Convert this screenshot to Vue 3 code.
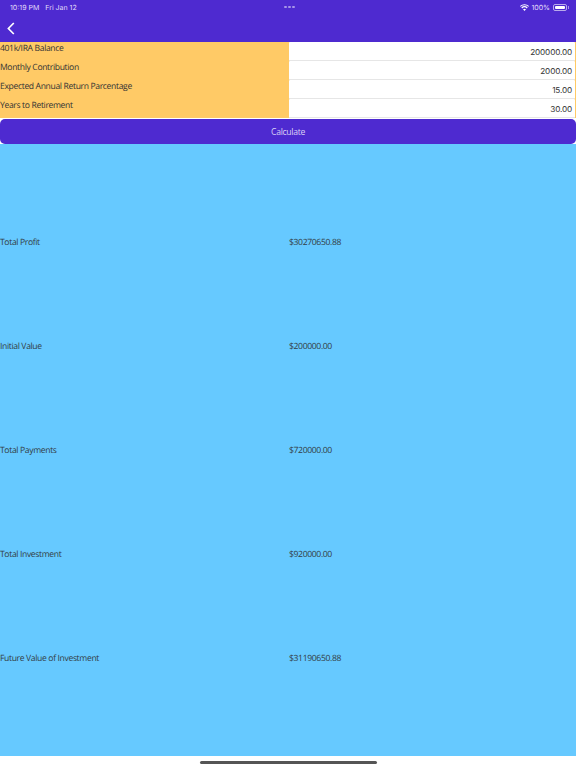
<script setup>
const fields = [
  { label: '401k/IRA Balance', value: '200000.00' },
  { label: 'Monthly Contribution', value: '2000.00' },
  { label: 'Expected Annual Return Parcentage', value: '15.00' },
  { label: 'Years to Retirement', value: '30.00' },
];

const results = [
  { label: 'Total Profit', value: '$30270650.88' },
  { label: 'Initial Value', value: '$200000.00' },
  { label: 'Total Payments', value: '$720000.00' },
  { label: 'Total Investment', value: '$920000.00' },
  { label: 'Future Value of Investment', value: '$31190650.88' },
];
</script>

<template>
  <div class="page">
    <header class="header">
      <div class="status">
        <div class="status-left">
          <span>10:19 PM</span>
          <span>Fri Jan 12</span>
        </div>
        <div class="dots"><i></i><i></i><i></i></div>
        <div class="status-right">
          <svg class="wifi" width="9" height="7" viewBox="0 0 18 14">
            <path d="M9 14 L6 10.6 A4.6 4.6 0 0 1 12 10.6 Z" fill="#fff" />
            <path d="M4.4 8.8 L2.6 6.8 A9.4 9.4 0 0 1 15.4 6.8 L13.6 8.8 A6.8 6.8 0 0 0 4.4 8.8 Z" fill="#fff" />
            <path d="M1.4 5.4 L0 3.8 A13.4 13.4 0 0 1 18 3.8 L16.6 5.4 A11.2 11.2 0 0 0 1.4 5.4 Z" fill="#fff" />
          </svg>
          <span>100%</span>
          <div class="battery"><div class="battery-fill"></div></div>
          <div class="battery-tip"></div>
        </div>
      </div>
      <div class="nav">
        <svg width="8" height="13" viewBox="0 0 8 13" fill="none">
          <path d="M6.8 1 L1.4 6.5 L6.8 12" stroke="#fff" stroke-width="1.7" />
        </svg>
      </div>
    </header>

    <section class="form">
      <template v-for="field in fields" :key="field.label">
        <div class="field-label">{{ field.label }}</div>
        <div class="field-input">{{ field.value }}</div>
      </template>
    </section>

    <button class="calc-btn">Calculate</button>

    <section class="results">
      <div v-for="row in results" :key="row.label" class="result-row">
        <span>{{ row.label }}</span>
        <span>{{ row.value }}</span>
      </div>
    </section>

    <footer class="home-bar"><div class="home-indicator"></div></footer>
  </div>
</template>

<style scoped>
.page {
  display: flex;
  flex-direction: column;
  width: 576px;
  height: 768px;
  background-color: #fff;
  font-family: "Open Sans", sans-serif;
  text-rendering: geometricPrecision;
  overflow: hidden;
}

.header {
  height: 42px;
  background-color: #4e2ad0;
  color: #fff;
}

.status {
  display: flex;
  justify-content: space-between;
  align-items: center;
  height: 14px;
  padding: 0 7px 0 10px;
  font-family: Inter, sans-serif;
  font-size: 7px;
  color: #e4defa;
}

.status-left {
  display: flex;
  gap: 6px;
  width: 120px;
}

.dots {
  display: flex;
  gap: 1.5px;
}

.dots i {
  width: 2.5px;
  height: 2.5px;
  border-radius: 50%;
  background-color: #a795e8;
}

.status-right {
  display: flex;
  justify-content: flex-end;
  align-items: center;
  gap: 2px;
  width: 120px;
}

.battery {
  width: 14px;
  height: 7px;
  margin-left: 1px;
  padding: 1px;
  box-sizing: border-box;
  border: 0.5px solid #b9abeb;
  border-radius: 2px;
}

.battery-fill {
  height: 100%;
  background-color: #fff;
  border-radius: 1px;
}

.battery-tip {
  width: 1px;
  height: 3px;
  margin-left: -1px;
  background-color: #a795e8;
}

.nav {
  display: flex;
  align-items: center;
  height: 28px;
  padding-left: 7px;
}

.form {
  display: grid;
  grid-template-columns: 288px 288px;
  grid-auto-rows: 19px;
  height: 76px;
  margin-bottom: 1px;
  background-color: #ffca66;
}

.field-label {
  font-size: 8.6px;
  letter-spacing: -0.36px;
  line-height: 13px;
  color: #333;
}

.field-input {
  display: flex;
  justify-content: flex-end;
  align-items: center;
  margin: 0 1px;
  padding: 1px 3px 0 0;
  background-color: #fff;
  border-bottom: 1px solid #e6e6e6;
  border-radius: 1px;
  box-sizing: border-box;
  font-family: Inter, sans-serif;
  font-size: 8.2px;
  letter-spacing: -0.15px;
  color: #333;
}

.calc-btn {
  height: 25px;
  border: none;
  border-radius: 5px;
  background-color: #4e2ad0;
  color: #d9d2f6;
  font-family: "Open Sans", sans-serif;
  font-size: 8.6px;
  letter-spacing: -0.3px;
  padding: 0;
}

.results {
  flex: 1;
  display: grid;
  grid-auto-rows: 104px;
  align-content: center;
  background-color: #66c9ff;
}

.result-row {
  display: grid;
  grid-template-columns: 289px 287px;
  align-items: center;
  font-size: 8.6px;
  letter-spacing: -0.36px;
  color: #333d45;
}

.home-bar {
  display: flex;
  justify-content: center;
  align-items: center;
  height: 12px;
}

.home-indicator {
  width: 177px;
  height: 3px;
  border-radius: 2px;
  background-color: #555;
}
</style>

<style>
body {
  margin: 0;
}
</style>
